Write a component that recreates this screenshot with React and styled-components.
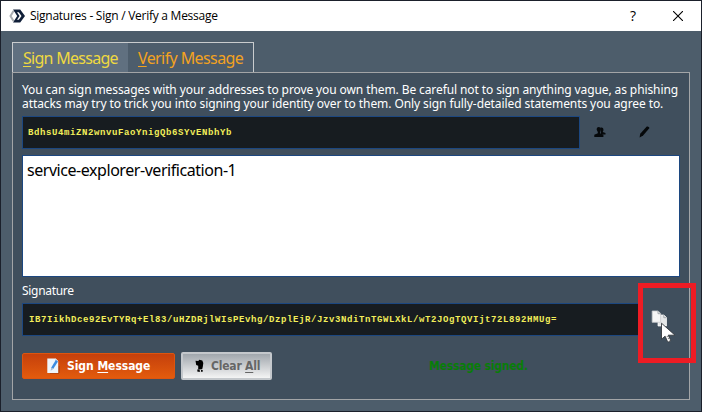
import React from "react";
import styled, { createGlobalStyle } from "styled-components";

const Global = createGlobalStyle`
  * { box-sizing: border-box; }
  body { margin: 0; background: #1a202b; overflow: hidden; }
`;
const condensed = `"DejaVu Sans Condensed", "DejaVu Sans", sans-serif`;

const Window = styled.div`
  position: relative;
  width: 702px;
  height: 412px;
  border: 1px solid #1b202b;
  background: #4d5d6b;
  display: flex;
  flex-direction: column;
  font: 12px/14px "Noto Sans", sans-serif;
  color: #fff;
  white-space: nowrap;
`;
const TitleBar = styled.header`
  flex: none;
  height: 30px;
  background: #fff;
  color: #000;
  display: flex;
  align-items: center;
  padding: 0 18px 0 8px;
`;
const Title = styled.h1`
  flex: 1;
  margin: 0 0 0 5px;
  font: 400 12px/16px "Open Sans", sans-serif;
  letter-spacing: ${(p) => p.$spacing};
`;
const HelpMark = styled.span`
  font: 500 14px/16px "Open Sans", sans-serif;
  margin-right: 37px;
`;
const Tabs = styled.nav`
  flex: none;
  align-self: flex-start;
  display: flex;
  height: 30px;
  width: 242px;
  margin: 11px 0 0 11px;
  border: 1px solid #c9ccce;
  border-bottom: 0;
`;
const Tab = styled.div`
  width: ${(p) => p.$width};
  padding: 5px 0 0 10px;
  font: 16px/20px "Noto Sans", sans-serif;
  letter-spacing: ${(p) => p.$spacing};
  color: ${(p) => (p.$active ? "#efd940" : "#f3a21f")};
  background: ${(p) => (p.$active ? "#607080" : "#4d5d6c")};
`;
const Key = styled.span`
  text-decoration: underline;
  text-underline-offset: 2px;
  text-decoration-thickness: 1px;
  text-decoration-skip-ink: none;
`;
const Panel = styled.main`
  width: 678px;
  height: 328px;
  margin-left: 11px;
  padding: 10px 9px 0;
  border: 1px solid #a3a5a7;
  background: #404f5d;
`;
const Intro = styled.p`
  margin: 0;
  height: 33px;
`;
const Line = styled.span`
  display: block;
  letter-spacing: ${(p) => p.$spacing};
`;
const AddressRow = styled.div`
  display: flex;
  align-items: center;
  height: 33px;
`;
const Field = styled.div`
  width: ${(p) => p.$width};
  height: 33px;
  flex: none;
  display: flex;
  align-items: center;
  padding-left: ${(p) => p.$inset};
  background: #171c20;
  border: 1px solid #1c4780;
  color: #f2ee5a;
  font: 700 9px/12px "Liberation Mono", monospace;
  letter-spacing: ${(p) => p.$spacing};
`;
const IconSlot = styled.span`
  display: flex;
  margin-left: ${(p) => p.$gap};
  margin-bottom: 2px;
`;
const MessageArea = styled.div`
  height: 122px;
  margin-top: 6px;
  padding: 4px 4px;
  background: #fff;
  border: 1px solid #1c4780;
  color: #000;
  font: 16px/20px "Noto Sans", sans-serif;
  letter-spacing: ${(p) => p.$spacing};
`;
const Label = styled.div`
  margin-top: 7px;
  height: 19px;
  letter-spacing: ${(p) => p.$spacing};
`;
const Actions = styled.div`
  display: flex;
  align-items: center;
  height: 28px;
  margin-top: 16px;
`;
const Button = styled.button`
  display: flex;
  align-items: center;
  width: ${(p) => p.$width};
  height: ${(p) => (p.$primary ? "26px" : "28px")};
  margin: 0 6px 0 0;
  padding: 0 0 0 ${(p) => (p.$primary ? "24px" : "12px")};
  gap: 7px;
  border: ${(p) => (p.$primary ? "1px solid #dd550f" : "2px solid #c4c8cc")};
  border-radius: 2px;
  background: ${(p) =>
    p.$primary
      ? "linear-gradient(#c5400c, #e25b0d)"
      : "linear-gradient(#a1a7ad, #f4f4f4)"};
  color: ${(p) => (p.$primary ? "#fff" : "#666")};
  font: 700 12px/14px ${condensed};
  font-stretch: condensed;
  letter-spacing: ${(p) => p.$spacing};
  white-space: nowrap;
`;
const Status = styled.span`
  margin-left: 151px;
  color: #087d08;
  font: 700 12px/14px ${condensed};
  font-stretch: condensed;
  letter-spacing: ${(p) => p.$spacing};
`;
const Highlight = styled.div`
  position: absolute;
  left: 637px;
  top: 282px;
  width: 58px;
  height: 80px;
  border: 5px solid #ee1c24;
  background: linear-gradient(90deg, #404f5d 46px, #a3a5a7 46px 47px, #4d5d6b 47px);
  svg { display: block; margin: 22px 0 0 8px; }
`;

const Logo = () => (
  <svg width="16" height="16" viewBox="0 0 16 16" fill="none">
    <path d="M4.5 3 1.5 8l3 5" stroke="#a9adb1" strokeWidth="2" />
    <path d="M4 1.5h7.2L16 8l-4.8 6.5H4L8.2 8z" fill="#101f38" />
    <path d="M8 4.2h1.8L12.5 8l-2.7 3.8H8L10.6 8z" fill="#fff" />
  </svg>
);
const Close = () => (
  <svg width="10" height="10" viewBox="0 0 10 10">
    <path d="m0 0 10 10M10 0 0 10" stroke="#000" strokeWidth="1.1" />
  </svg>
);
const People = () => (
  <svg width="12" height="10" viewBox="0 0 12 10" fill="#06090b">
    <path d="M6.2 1C7.7-.2 9.8.8 9.4 3.4L8.7 5l2.8 1v1.6H7z" />
    <path d="M2.7 2.8C2.4-.9 7.1-.9 6.8 2.8L6 5v1.2l3.4 1.5V10H.3V7.7L3.8 6.2V5z" />
  </svg>
);
const Pencil = () => (
  <svg width="11" height="12" viewBox="0 0 11 12" fill="#05080a">
    <path d="m.6 11.4.6-3.7L7.8.5Q9.8 0 10.5 2L4.1 9.6z" />
  </svg>
);
const Notepad = () => (
  <svg width="13" height="16" viewBox="0 0 13 16">
    <path d="M11 8h2v7h-2zM3 15h9v1H3z" fill="#933c16" opacity=".5" />
    <path d="M.3.5h8.5L11.2 3v12H.3z" fill="#eef5fb" />
    <path d="m8.5.5 2.7 2.8H8z" fill="#c3d5e5" />
    <path d="m3.8 12.5.5-3L8.8 2l2.2 1.4-4.5 7.2z" fill="#3b8be0" />
    <path d="m3.8 12.5.5-3 2.2 1.1z" fill="#b3c5d6" />
  </svg>
);
const Eraser = () => (
  <svg width="9" height="14" viewBox="0 0 9 14" fill="#000">
    <path d="M.5 1.7 3.3 2l1-1.2 3 .7L8.3 4 7.8 7.8l-.6 2.4-4 .3V6.8L1.2 6z" />
    <path d="M2.2 10.5h2.2l.8 2.3H2.5zM6 11h1.7v1.8H6z" />
  </svg>
);
const CopyWithPointer = () => (
  <svg width="26" height="34" viewBox="0 0 26 34">
    <path d="M7 5h6l2.5 2.5V16H7z" fill="#e6e8e9" stroke="#fff" strokeWidth=".7" />
    <path d="M12.8 5v2.7h2.7" fill="none" stroke="#a5aaae" />
    <path d="M1.2 1h6l2.4 2.5v8.8H1.2z" fill="#f5f5f5" stroke="#c8cbce" strokeWidth=".8" />
    <path d="M7 1v2.7h2.5" fill="none" stroke="#8e959b" strokeWidth=".8" />
    <path
      d="M10.5 13.2v16l3.6-3 2.4 5.3c1.4 1 3.7-.1 3-1.7l-2.3-4.6h6.8z"
      fill="#fff"
      stroke="#34393e"
      strokeWidth=".9"
    />
    <path d="m16 26 2.5 4.5" stroke="#777" strokeDasharray="1.2 1" />
  </svg>
);

export default function App() {
  return (
    <>
      <Global />
      <Window>
        <TitleBar>
          <Logo />
          <Title $spacing="-.26px">Signatures - Sign / Verify a Message</Title>
          <HelpMark>?</HelpMark>
          <Close />
        </TitleBar>
        <Tabs>
          <Tab $active $width="115px" $spacing="-.72px"><Key>S</Key>ign Message</Tab>
          <Tab $width="125px" $spacing="-.6px"><Key>V</Key>erify Message</Tab>
        </Tabs>
        <Panel>
          <Intro>
            <Line $spacing="-.1px">You can sign messages with your addresses to prove you own them. Be careful not to sign anything vague, as phishing</Line>
            <Line $spacing="-.085px">attacks may try to trick you into signing your identity over to them. Only sign fully-detailed statements you agree to.</Line>
          </Intro>
          <AddressRow>
            <Field $width="558px" $inset="5px" $spacing=".6px">BdhsU4miZN2wnvuFaoYnigQb6SYvENbhYb</Field>
            <IconSlot $gap="14px"><People /></IconSlot>
            <IconSlot $gap="33px"><Pencil /></IconSlot>
          </AddressRow>
          <MessageArea $spacing="-.45px">service-explorer-verification-1</MessageArea>
          <Label $spacing="-.3px">Signature</Label>
          <Field $width="618px" $inset="6px" $spacing=".6px">IB7IikhDce92EvTYRq+El83/uHZDRjlWIsPEvhg/DzplEjR/Jzv3NdiTnTGWLXkL/wT2JOgTQVIjt72L892HMUg=</Field>
          <Actions>
            <Button $primary $width="153px" $spacing="-.05px"><Notepad /><span>Sign <Key>M</Key>essage</span></Button>
            <Button $width="91px" $spacing="-.2px"><Eraser /><span>Clear <Key>A</Key>ll</span></Button>
            <Status $spacing="-.2px">Message signed.</Status>
          </Actions>
        </Panel>
        <Highlight><CopyWithPointer /></Highlight>
      </Window>
    </>
  );
}
